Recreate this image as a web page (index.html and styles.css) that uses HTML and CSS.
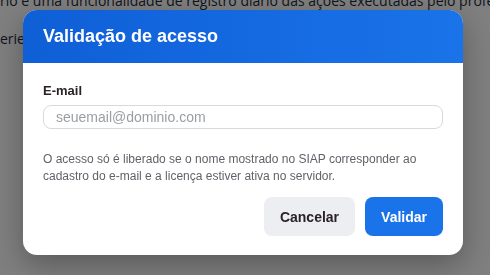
FILE: index.html
```html
<!DOCTYPE html>
<html lang="pt-BR">
<head>
<meta charset="utf-8">
<title>Validação de acesso</title>
<link rel="stylesheet" href="styles.css">
</head>
<body>
<div class="page">
  <p class="page-text first">rio é uma funcionalidade de registro diário das ações executadas pelo professor em sala.</p>
  <p class="page-text">erie e turma para consultar os registros já cadastrados.</p>
</div>
<div class="overlay">
  <div class="modal" role="dialog" aria-labelledby="modal-title">
    <div class="modal-header">
      <h2 id="modal-title" class="modal-title">Validação de acesso</h2>
    </div>
    <div class="modal-body">
      <label class="field-label" for="email">E-mail</label>
      <input class="field-input" id="email" type="email" placeholder="seuemail@dominio.com">
      <p class="help-text">O acesso só é liberado se o nome mostrado no SIAP corresponder ao cadastro do e-mail e a licença estiver ativa no servidor.</p>
      <div class="actions">
        <button class="btn btn-secondary" type="button">Cancelar</button>
        <button class="btn btn-primary" type="button">Validar</button>
      </div>
    </div>
  </div>
</div>
</body>
</html>
```

FILE: styles.css
```css
html, body {
  margin: 0;
  padding: 0;
  height: 100%;
  overflow: hidden;
  background: #ffffff;
}

.page {
  font-family: "Open Sans", "Noto Sans", sans-serif;
  font-size: 14px;
  color: #1c2b3b;
  margin-top: -11px;
}

.page-text {
  margin: 0 0 14px 0;
  line-height: 24px;
  white-space: nowrap;
}

.overlay {
  position: fixed;
  inset: 0;
  background: rgba(0, 0, 0, 0.5);
  display: flex;
  justify-content: center;
  align-items: flex-start;
  padding: 10px 4px 0 0;
}

.modal {
  width: 440px;
  background: #ffffff;
  border-radius: 14px;
  overflow: hidden;
  box-shadow: 0 10px 30px rgba(0, 0, 0, 0.3);
  font-family: "Liberation Sans", Arial, sans-serif;
}

.modal-header {
  background: linear-gradient(90deg, #0f5fd7 0%, #1a73e8 100%);
  padding: 16px 20px;
}

.modal-title {
  margin: 0;
  color: #ffffff;
  font-size: 18px;
  font-weight: 700;
  line-height: 21px;
}

.modal-body {
  padding: 20px 20px 19px 20px;
  display: flex;
  flex-direction: column;
}

.field-label {
  font-size: 13px;
  font-weight: 700;
  line-height: 15px;
  color: #2b2224;
  margin-bottom: 7px;
}

.field-input {
  box-sizing: border-box;
  width: 100%;
  height: 24px;
  padding: 0 12px;
  border: 1px solid #d4dae0;
  border-radius: 8px;
  font-family: "Liberation Sans", Arial, sans-serif;
  font-size: 14px;
  color: #202124;
  outline: none;
}

.field-input::placeholder {
  color: #9a9ea3;
}

.help-text {
  margin: 22px 0 12px 0;
  font-size: 12px;
  line-height: 17px;
  color: #5f6368;
}

.actions {
  display: flex;
  justify-content: flex-end;
  gap: 10px;
}

.btn {
  height: 39px;
  padding: 0 16px;
  border: none;
  border-radius: 8px;
  font-family: "Liberation Sans", Arial, sans-serif;
  font-size: 14px;
  font-weight: 700;
  cursor: pointer;
}

.btn-secondary {
  background: #eceef1;
  color: #2b2226;
}

.btn-primary {
  background: #1a73e8;
  color: #ffffff;
}
```
